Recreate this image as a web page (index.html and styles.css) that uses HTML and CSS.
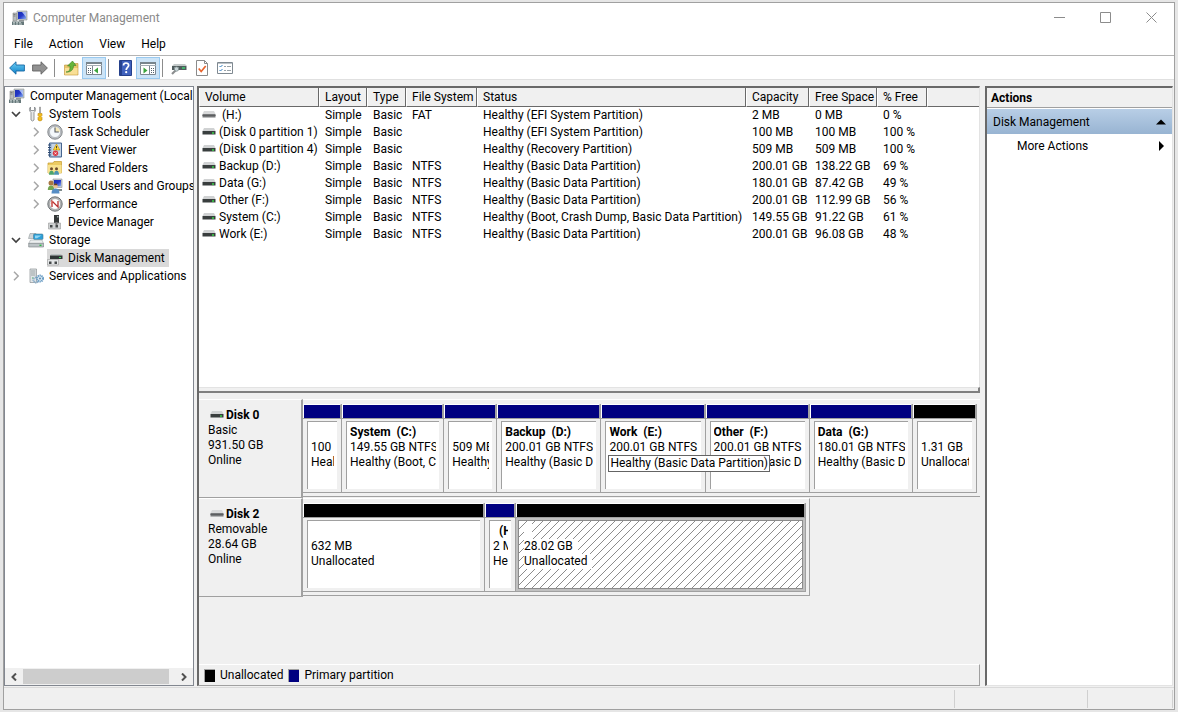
FILE: index.html
```html
<!DOCTYPE html>
<html lang="en">
<head>
<meta charset="utf-8">
<title>Computer Management</title>
<link rel="stylesheet" href="styles.css">
</head>
<body>
<svg class="defs" aria-hidden="true">
  <defs>
    <linearGradient id="gBlue" x1="0" y1="0" x2="0" y2="1"><stop offset="0" stop-color="#6fd0f5"/><stop offset="1" stop-color="#0c7fc8"/></linearGradient>
    <linearGradient id="gScreen" x1="0" y1="0" x2="1" y2="1"><stop offset="0" stop-color="#1a2fb0"/><stop offset=".5" stop-color="#2438c8"/><stop offset="1" stop-color="#8fb4f0"/></linearGradient>
    <pattern id="hatch" width="8" height="8" patternUnits="userSpaceOnUse"><path d="M0 8L8 0M-1 1L1-1M7 9L9 7" stroke="#8c8c8c" stroke-width="1"/></pattern>
  </defs>
  <symbol id="i-computer" viewBox="0 0 16 16">
    <path d="M5 1h10v9H5z" fill="#c4c9cc" stroke="#8d9396" stroke-width=".6"/><path d="M6 2h8v7H6z" fill="url(#gScreen)"/><path d="M10 2l4 0v5z" fill="#d3e4fb" opacity=".75"/>
    <path d="M1 3h3.500v8H1z" fill="#b9bebf" stroke="#777" stroke-width=".5"/><path d="M1.500 4.500h2M1.500 6h2" stroke="#555" stroke-width=".6"/><path d="M7 10h5v1.500H7z" fill="#8e9496"/>
    <path d="M0 11.500h12V15H0z" fill="#66787a"/><path d="M1 12.700h2M4 12.700h2M7 12.700h2M1 14.100h2M4 14.100h2M7 14.100h3" stroke="#d8e0e0" stroke-width=".8"/>
  </symbol>
  <symbol id="i-tools" viewBox="0 0 16 16">
    <path d="M2.500 1C1 2 1 5 3 6.500V14q1.500 2 3 0V6.500C8 5 8 2 6.500 1v3.500h-4z" fill="#e7e9ea" stroke="#7d8285" stroke-width=".8"/>
    <path d="M11.500 1h1v6h-1z" fill="#999" stroke="#888" stroke-width=".5"/><path d="M10 7.500h4v2l-1 1 1 1V14q-2 2-4 0v-2.500l1-1-1-1z" fill="#f2bd1d" stroke="#bd8710" stroke-width=".6"/>
  </symbol>
  <symbol id="i-clock" viewBox="0 0 16 16">
    <circle cx="8" cy="8" r="7.200" fill="#c2c4c8" stroke="#777c80" stroke-width=".9"/><circle cx="8" cy="8" r="5.500" fill="#f4f8fb" stroke="#8d949c" stroke-width=".5"/><path d="M8 3v5h4.800A5 5 0 0 0 8 3z" fill="#f5e8b8"/><path d="M8 3.500V8h3.800" fill="none" stroke="#555b66" stroke-width="1.100"/>
  </symbol>
  <symbol id="i-event" viewBox="0 0 16 16">
    <path d="M2.500 1h12v14h-12z" fill="#a9bed8" stroke="#46658f"/><path d="M5 3h9M5 5h9M5 7h9M5 9h9M5 11h9M5 13h9" stroke="#e7eef7" stroke-width=".9"/><path d="M1 3h3M1 5.500h3M1 8h3M1 10.500h3M1 13h3" stroke="#304a70"/>
    <path d="M9.500 2l3.300 6H6.200z" fill="#ffd83a" stroke="#bf8d00" stroke-width=".6"/><path d="M9.500 4v2M9.500 6.700v.7" stroke="#333" stroke-width=".9"/><circle cx="8.500" cy="11.300" r="2.700" fill="#d93843"/><path d="M7.500 10.300l2 2m0-2l-2 2" stroke="#fff" stroke-width=".8"/>
  </symbol>
  <symbol id="i-shared" viewBox="0 0 16 16">
    <path d="M1 3h5l1-1.500h7.500V13H1z" fill="#eccb62" stroke="#c49b2e" stroke-width=".7"/><path d="M1 5h13.500v8H1z" fill="#f8e28f"/><circle cx="4.500" cy="8.800" r="1.500" fill="#6b4a2d"/><circle cx="9.500" cy="8.800" r="1.500" fill="#6b4a2d"/><path d="M2 14.800q0-4.100 2.500-4.100T7 14.800z" fill="#4ca46c"/><path d="M7 14.800q0-4.100 2.500-4.100t2.500 4.100z" fill="#4b94b3"/>
  </symbol>
  <symbol id="i-users" viewBox="0 0 16 16">
    <path d="M6 1h9v8.500H6z" fill="#cdd0d2" stroke="#8c9194" stroke-width=".6"/><path d="M7 2h7v6.300H7z" fill="url(#gScreen)"/><path d="M10 11h5v2h-5z" fill="#7f8b8c"/>
    <circle cx="4" cy="5" r="2.500" fill="#a87744"/><path d="M.8 12q0-4.500 3.300-4.500T7.300 12z" fill="#74a552"/><circle cx="8.500" cy="8" r="2.300" fill="#efc298"/><path d="M6.300 7.300q2.500-4 4.500 0z" fill="#684421"/><path d="M4.500 15.500q0-5 4-5t4 5z" fill="#568dc5"/>
  </symbol>
  <symbol id="i-perf" viewBox="0 0 16 16">
    <circle cx="8" cy="8" r="7.200" fill="#b6b8ba" stroke="#5f6467" stroke-width=".9"/><circle cx="8" cy="8" r="5.400" fill="#fff" stroke="#888" stroke-width=".5"/><path d="M5 11V5l6 6V5" fill="none" stroke="#b92d2d" stroke-width="1.300"/><path d="M4 8l2-3" stroke="#d96a5c"/>
  </symbol>
  <symbol id="i-device" viewBox="0 0 16 16">
    <path d="M7 1h5v8H7z" fill="#343838"/><path d="M10 2h1.500v1.500H10z" fill="#a2adad"/><path d="M1.500 9h12v6h-12z" fill="#cfd2d3" stroke="#999" stroke-width=".6"/><path d="M3 11h2.500v2.500H3zM8.500 11H11v2.500H8.500z" fill="#464a4b"/><path d="M8.500 8h2v3h-2z" fill="#777"/>
  </symbol>
  <symbol id="i-storage" viewBox="0 0 16 16">
    <path d="M2 1.500h6l1 5H.5z" fill="#cfd4d6" stroke="#858c90" stroke-width=".5"/><rect x="5.500" y="2" width="9.500" height="5.500" rx="1" fill="#2c9fd8" stroke="#487c96" stroke-width=".6"/><path d="M7 3.500h6.500L9 6.300H7z" fill="#8ed5f4"/>
    <path d="M2.500 8h11.500l1.500 3.500H.7z" fill="#eceff0" stroke="#969ca0" stroke-width=".5"/><path d="M.7 11.300h14.800V15H.7z" fill="#bcc3c6" stroke="#777e82" stroke-width=".6"/><path d="M11.500 13.300h2" stroke="#22be3c" stroke-width="1.300"/>
  </symbol>
  <symbol id="i-disk" viewBox="0 0 16 16">
    <path d="M4 4h10l1.500 1.500H3z" fill="#bcc3c4"/><path d="M3 5.500h12.500V9H3z" fill="#303737"/><path d="M12 7.500h2" stroke="#43dc60"/><path d="M.5 9.500h11V15H.5z" fill="#e4e6e7" stroke="#999" stroke-width=".6"/><path d="M2 11.500h2.500V14H2zM7.500 11.500H10V14H7.500z" fill="#45494a"/>
  </symbol>
  <symbol id="i-services" viewBox="0 0 16 16">
    <path d="M2 1h6.500v13.500H2z" fill="#e1e5e7" stroke="#8b9194" stroke-width=".7"/><path d="M3 3h4.500M3 5h4.500M3 7h4.500" stroke="#889296" stroke-width=".8"/><path d="M4 10h1.500" stroke="#42a961"/>
    <circle cx="8" cy="12" r="2.600" fill="none" stroke="#8badc7" stroke-width="2" stroke-dasharray="1.200 .6"/><circle cx="12" cy="10.500" r="3" fill="#dceaf4" stroke="#6b9dc4" stroke-width="2" stroke-dasharray="1.300 .6"/><circle cx="12" cy="10.500" r="1" fill="#5e8bae"/>
  </symbol>
  <symbol id="i-vol" viewBox="0 0 14 9"><path d="M2 1h10l1.500 3H.5z" fill="#d0d2d3"/><path d="M.5 4h13v3.500H.5z" fill="#393e3e"/><path d="M10 6h2" stroke="#37d347" stroke-width="1.300"/></symbol>
  <symbol id="i-volr" viewBox="0 0 14 9"><path d="M2 1h10l1.500 3H.5z" fill="#d8d9da"/><path d="M.5 4h13v3.500H.5z" fill="#77797b"/><path d="M.5 5.500h13" stroke="#5c5e60"/></symbol>
  <symbol id="i-back" viewBox="0 0 16 16"><path d="M.6 8L7 1.800V5h8.400v6H7v3.200z" fill="url(#gBlue)" stroke="#1768a4" stroke-width=".9"/></symbol>
  <symbol id="i-fwd" viewBox="0 0 16 16"><path d="M15.400 8L9 1.800V5H.6v6H9v3.200z" fill="#919191" stroke="#626262" stroke-width=".9"/></symbol>
  <symbol id="i-up" viewBox="0 0 16 16"><path d="M1.500 5h5l1-1.500H15V15H1.500z" fill="#e9c56a" stroke="#bd9238" stroke-width=".6"/><path d="M2 8h12.500v6.500H2z" fill="#f9df96"/><path d="M3 12c4 0 4-3 4-6H4.500L9.500 1 13 5.500h-2.500C10.500 10 7.500 12.500 3 12z" fill="#67b53b" stroke="#388125" stroke-width=".6"/></symbol>
  <symbol id="i-tree" viewBox="0 0 16 16"><path d="M.5 2.500h15v12H.5z" fill="#fff" stroke="#7c8790"/><path d="M0 2h16v2H0z" fill="#78858d"/><path d="M0 5h16v1H0z" fill="#a4adb4"/><path d="M6.500 6v9" stroke="#7c8790"/><path d="M2 8.500h1M4 8.500h1M2 10.500h1M4 10.500h1M2 12.500h1M4 12.500h1" stroke="#54616a"/><path d="M8 10.500l4-3v6z" fill="#3ba53c"/></symbol>
  <symbol id="i-pane" viewBox="0 0 16 16"><path d="M.5 2.500h15v12H.5z" fill="#fff" stroke="#7c8790"/><path d="M0 2h16v2H0z" fill="#78858d"/><path d="M0 5h16v1H0z" fill="#a4adb4"/><path d="M9.500 6v9" stroke="#7c8790"/><path d="M11 8.500h1M13 8.500h1M11 10.500h1M13 10.500h1M11 12.500h1M13 12.500h1" stroke="#54616a"/><path d="M7.500 10.500l-4-3v6z" fill="#3ba53c"/></symbol>
  <symbol id="i-help" viewBox="0 0 16 16"><path d="M2.500.5h12v15h-12z" fill="#3f61bd" stroke="#25408b"/><path d="M3 1h2v14H3z" fill="#26428f"/><path d="M6.500 5.500Q6.500 3 9 3t2.700 2.300c0 2-2.500 2-2.500 4.700" fill="none" stroke="#fff" stroke-width="1.700"/><circle cx="9.200" cy="12.200" r="1.100" fill="#fff"/></symbol>
  <symbol id="i-connect" viewBox="0 0 16 16"><path d="M3 4h11l2 2H1z" fill="#c4caca"/><path d="M1 6h14.500v4H1z" fill="#505c5d"/><path d="M3 8h5" stroke="#a5b0b1"/><path d="M11 8h3" stroke="#3fd071" stroke-width="1.500"/><path d="M1 14l4-4" stroke="#8b8d8e" stroke-width="2.200"/><circle cx="5.500" cy="9" r="2.200" fill="#c9d6d8" stroke="#768485" stroke-width=".7"/></symbol>
  <symbol id="i-check" viewBox="0 0 16 16"><path d="M2.500.5h8l3 3v12h-11z" fill="#fff" stroke="#8b8b8b"/><path d="M10.500.5v3h3" fill="none" stroke="#8b8b8b"/><path d="M4.700 8.500l2.500 3 4.500-5.500" fill="none" stroke="#e8632c" stroke-width="1.700"/></symbol>
  <symbol id="i-list" viewBox="0 0 16 16"><path d="M.5 2.500h15v11H.5z" fill="#fff" stroke="#7f8991"/><path d="M1 3h14v1H1z" fill="#bcc3c8"/><path d="M2.500 6l1 1 2-2M2.500 10l1 1 2-2" fill="none" stroke="#3783c5"/><path d="M7 6.500h2M10 6.500h4M7 10.500h2M10 10.500h4" stroke="#99a2a8"/></symbol>
  <symbol id="c-right" viewBox="0 0 10 10"><path d="M3 .8L7.200 5 3 9.200" fill="none" stroke="#a6a6a6" stroke-width="1.500"/></symbol>
  <symbol id="c-down" viewBox="0 0 10 10"><path d="M1 3L5 7 9 3" fill="none" stroke="#404040" stroke-width="1.700"/></symbol>
</svg>

<div class="window">
  <header class="titlebar">
    <svg class="ico"><use href="#i-computer"/></svg>
    <h1 class="title">Computer Management</h1>
    <div class="controls">
      <button class="ctl" aria-label="Minimize"><svg viewBox="0 0 11 11"><path d="M0 5.500h11"/></svg></button>
      <button class="ctl" aria-label="Maximize"><svg viewBox="0 0 11 11"><path d="M.5.5h10v10H.5z"/></svg></button>
      <button class="ctl" aria-label="Close"><svg viewBox="0 0 11 11"><path d="M.5.5l10 10M10.500.5l-10 10"/></svg></button>
    </div>
  </header>
  <nav class="menubar">
    <button class="menu">File</button><button class="menu">Action</button><button class="menu">View</button><button class="menu">Help</button>
  </nav>
  <div class="toolbar" role="toolbar">
    <button class="tool" aria-label="Back"><svg class="ico"><use href="#i-back"/></svg></button>
    <button class="tool" aria-label="Forward"><svg class="ico"><use href="#i-fwd"/></svg></button>
    <span class="sep"></span>
    <button class="tool" aria-label="Up one level"><svg class="ico"><use href="#i-up"/></svg></button>
    <button class="tool on" aria-label="Show console tree"><svg class="ico"><use href="#i-tree"/></svg></button>
    <span class="sep"></span>
    <button class="tool" aria-label="Help"><svg class="ico"><use href="#i-help"/></svg></button>
    <button class="tool on" aria-label="Show action pane"><svg class="ico"><use href="#i-pane"/></svg></button>
    <span class="sep"></span>
    <button class="tool" aria-label="Refresh"><svg class="ico"><use href="#i-connect"/></svg></button>
    <button class="tool" aria-label="Check"><svg class="ico"><use href="#i-check"/></svg></button>
    <button class="tool" aria-label="Settings"><svg class="ico"><use href="#i-list"/></svg></button>
  </div>

  <div class="body">
    <aside class="tree-pane">
      <ul class="tree">
        <li class="node root"><svg class="ico"><use href="#i-computer"/></svg><span class="name">Computer Management (Local</span></li>
        <li class="node"><button class="twist" aria-label="Collapse"><svg><use href="#c-down"/></svg></button><svg class="ico"><use href="#i-tools"/></svg><span class="name">System Tools</span></li>
        <li class="node sub"><button class="twist" aria-label="Expand"><svg><use href="#c-right"/></svg></button><svg class="ico"><use href="#i-clock"/></svg><span class="name">Task Scheduler</span></li>
        <li class="node sub"><button class="twist" aria-label="Expand"><svg><use href="#c-right"/></svg></button><svg class="ico"><use href="#i-event"/></svg><span class="name">Event Viewer</span></li>
        <li class="node sub"><button class="twist" aria-label="Expand"><svg><use href="#c-right"/></svg></button><svg class="ico"><use href="#i-shared"/></svg><span class="name">Shared Folders</span></li>
        <li class="node sub"><button class="twist" aria-label="Expand"><svg><use href="#c-right"/></svg></button><svg class="ico"><use href="#i-users"/></svg><span class="name">Local Users and Groups</span></li>
        <li class="node sub"><button class="twist" aria-label="Expand"><svg><use href="#c-right"/></svg></button><svg class="ico"><use href="#i-perf"/></svg><span class="name">Performance</span></li>
        <li class="node sub"><span class="twist"></span><svg class="ico"><use href="#i-device"/></svg><span class="name">Device Manager</span></li>
        <li class="node"><button class="twist" aria-label="Collapse"><svg><use href="#c-down"/></svg></button><svg class="ico"><use href="#i-storage"/></svg><span class="name">Storage</span></li>
        <li class="node sub"><span class="twist"></span><span class="picked"><svg class="ico"><use href="#i-disk"/></svg><span class="name">Disk Management</span></span></li>
        <li class="node"><button class="twist" aria-label="Expand"><svg><use href="#c-right"/></svg></button><svg class="ico"><use href="#i-services"/></svg><span class="name">Services and Applications</span></li>
      </ul>
      <div class="hscroll">
        <button class="arrow" aria-label="Scroll left"><svg viewBox="0 0 8 8"><path d="M6 .5L2.500 4 6 7.500"/></svg></button>
        <div class="track"><div class="thumb"></div></div>
        <button class="arrow" aria-label="Scroll right"><svg viewBox="0 0 8 8"><path d="M2 .5L5.500 4 2 7.500"/></svg></button>
      </div>
    </aside>

    <main class="center">
      <section class="volumes">
        <table class="grid">
          <colgroup><col class="w-vol"><col class="w-lay"><col class="w-type"><col class="w-fs"><col class="w-stat"><col class="w-cap"><col class="w-free"><col class="w-pct"><col></colgroup>
          <thead><tr><th>Volume</th><th>Layout</th><th>Type</th><th>File System</th><th>Status</th><th>Capacity</th><th>Free Space</th><th>% Free</th><th></th></tr></thead>
          <tbody>
            <tr><td><svg class="vol"><use href="#i-volr"/></svg>&nbsp;(H:)</td><td>Simple</td><td>Basic</td><td>FAT</td><td>Healthy (EFI System Partition)</td><td>2 MB</td><td>0 MB</td><td>0 %</td><td></td></tr>
            <tr><td><svg class="vol"><use href="#i-vol"/></svg>(Disk 0 partition 1)</td><td>Simple</td><td>Basic</td><td></td><td>Healthy (EFI System Partition)</td><td>100 MB</td><td>100 MB</td><td>100 %</td><td></td></tr>
            <tr><td><svg class="vol"><use href="#i-vol"/></svg>(Disk 0 partition 4)</td><td>Simple</td><td>Basic</td><td></td><td>Healthy (Recovery Partition)</td><td>509 MB</td><td>509 MB</td><td>100 %</td><td></td></tr>
            <tr><td><svg class="vol"><use href="#i-vol"/></svg>Backup (D:)</td><td>Simple</td><td>Basic</td><td>NTFS</td><td>Healthy (Basic Data Partition)</td><td>200.01 GB</td><td>138.22 GB</td><td>69 %</td><td></td></tr>
            <tr><td><svg class="vol"><use href="#i-vol"/></svg>Data (G:)</td><td>Simple</td><td>Basic</td><td>NTFS</td><td>Healthy (Basic Data Partition)</td><td>180.01 GB</td><td>87.42 GB</td><td>49 %</td><td></td></tr>
            <tr><td><svg class="vol"><use href="#i-vol"/></svg>Other (F:)</td><td>Simple</td><td>Basic</td><td>NTFS</td><td>Healthy (Basic Data Partition)</td><td>200.01 GB</td><td>112.99 GB</td><td>56 %</td><td></td></tr>
            <tr><td><svg class="vol"><use href="#i-vol"/></svg>System (C:)</td><td>Simple</td><td>Basic</td><td>NTFS</td><td>Healthy (Boot, Crash Dump, Basic Data Partition)</td><td>149.55 GB</td><td>91.22 GB</td><td>61 %</td><td></td></tr>
            <tr><td><svg class="vol"><use href="#i-vol"/></svg>Work (E:)</td><td>Simple</td><td>Basic</td><td>NTFS</td><td>Healthy (Basic Data Partition)</td><td>200.01 GB</td><td>96.08 GB</td><td>48 %</td><td></td></tr>
          </tbody>
        </table>
      </section>
      <div class="splitter"></div>
      <section class="disks">
        <article class="disk">
          <div class="disk-info">
            <h2 class="disk-name"><svg class="vol"><use href="#i-vol"/></svg>Disk 0</h2>
            <p>Basic</p><p>931.50 GB</p><p>Online</p>
          </div>
          <div class="parts parts-0">
            <div class="part"><div class="bar"></div><div class="cell"><div class="face"><b></b><p>100 MB</p><p>Healthy</p></div></div></div>
            <div class="part"><div class="bar"></div><div class="cell"><div class="face"><b>System&nbsp; (C:)</b><p>149.55 GB NTFS</p><p>Healthy (Boot, Crash Dump)</p></div></div></div>
            <div class="part"><div class="bar"></div><div class="cell"><div class="face"><b></b><p>509 MB</p><p>Healthy</p></div></div></div>
            <div class="part"><div class="bar"></div><div class="cell"><div class="face"><b>Backup&nbsp; (D:)</b><p>200.01 GB NTFS</p><p>Healthy (Basic Data)</p></div></div></div>
            <div class="part tipped"><div class="bar"></div><div class="cell"><div class="face"><b>Work&nbsp; (E:)</b><p>200.01 GB NTFS</p></div></div><span class="tip" role="tooltip">Healthy (Basic Data Partition)</span></div>
            <div class="part"><div class="bar"></div><div class="cell"><div class="face"><b>Other&nbsp; (F:)</b><p>200.01 GB NTFS</p><p>Healthy (Basic Data)</p></div></div></div>
            <div class="part"><div class="bar"></div><div class="cell"><div class="face"><b>Data&nbsp; (G:)</b><p>180.01 GB NTFS</p><p>Healthy (Basic Data)</p></div></div></div>
            <div class="part"><div class="bar free"></div><div class="cell"><div class="face"><b></b><p>1.31 GB</p><p>Unallocated</p></div></div></div>
          </div>
        </article>
        <article class="disk">
          <div class="disk-info">
            <h2 class="disk-name"><svg class="vol"><use href="#i-volr"/></svg>Disk 2</h2>
            <p>Removable</p><p>28.64 GB</p><p>Online</p>
          </div>
          <div class="parts parts-2">
            <div class="part"><div class="bar free"></div><div class="cell"><div class="face"><b></b><p>632 MB</p><p>Unallocated</p></div></div></div>
            <div class="part"><div class="bar"></div><div class="cell"><div class="face"><b>&nbsp; (H:)</b><p>2 MB</p><p>Healthy</p></div></div></div>
            <div class="part chosen"><div class="bar free"></div><div class="cell"><div class="face"><svg class="hatch"><rect width="100%" height="100%" fill="url(#hatch)" shape-rendering="crispEdges"/></svg><b><span>&nbsp; </span></b><p><span>28.02 GB</span></p><p><span>Unallocated</span></p></div></div></div>
          </div>
        </article>
        <footer class="legend"><i class="key free"></i>Unallocated<i class="key"></i>Primary partition</footer>
      </section>
    </main>

    <aside class="actions">
      <h2 class="actions-head">Actions</h2>
      <button class="group">Disk Management<svg class="tri" viewBox="0 0 10 10"><path d="M0 7.500h10L5 2.500z"/></svg></button>
      <button class="more">More Actions<svg class="tri" viewBox="0 0 10 10"><path d="M3 0v10l5-5z"/></svg></button>
    </aside>
  </div>
  <footer class="status"><span></span><span class="s2"></span><span class="s3"></span></footer>
</div>
</body>
</html>
```
FILE: styles.css
```css
* { box-sizing: border-box; }
body {
  margin: 0;
  height: 100vh;
  padding: 2px 3px 2px 3px;
  background: #e6e6e6;
  color: #000;
  font: 12px/16px Roboto, "Open Sans", sans-serif;
}
button { border: 0; padding: 0; background: none; color: inherit; font: inherit; }
h1, h2, p, ul { margin: 0; padding: 0; font: inherit; }
ul { list-style: none; }
.defs { position: absolute; width: 0; height: 0; }
.ico { width: 16px; height: 16px; flex: none; }

.window {
  display: flex;
  flex-direction: column;
  height: 100%;
  border: 1px solid #a0a0a0;
  background: #f0f0f0;
}
.titlebar { display: flex; align-items: center; height: 29px; padding-left: 8px; gap: 5px; background: #fff; }
.title { flex: 1; color: #8a8a8a; }
.controls { display: flex; }
.ctl { width: 46px; height: 28px; display: grid; place-items: center; }
.ctl svg { width: 11px; height: 11px; fill: none; stroke: #8c8c8c; }
.menubar { display: flex; height: 24px; padding-left: 2px; background: #fff; border-bottom: 1px solid #b4b4b4; }
.menu { padding: 0 8px; }
.toolbar { display: flex; align-items: center; height: 24px; padding-left: 1px; background: #fff; border-bottom: 1px solid #e0e0e0; }
.tool { display: grid; place-items: center; width: 23px; height: 22px; }
.tool.on { width: 24px; background: #cce4f7; border: 1px solid #99c9ef; }
.sep { width: 1px; height: 18px; margin: 0 4px 0 3px; background: #8c8c8c; }
.on + .sep { margin-left: 2px; }

.body {
  flex: 1;
  min-height: 0;
  display: grid;
  grid-template-columns: 190px minmax(0, 1fr) 188px;
  gap: 3px;
  padding: 6px 1px 1px 0;
}
.tree-pane { display: flex; flex-direction: column; border: 1px solid #828790; background: #fff; overflow: hidden; }
.tree { flex: 1; }
.node { display: flex; align-items: center; height: 18px; padding-left: 5px; white-space: nowrap; }
.node.root { padding-left: 4px; }
.node.sub { padding-left: 25px; }
.name { padding-left: 5px; }
.twist { flex: none; display: grid; place-items: center; width: 12px; height: 16px; margin-right: 5px; }
.node:not(.sub) .twist { margin-right: 6px; }
.twist svg { width: 10px; height: 10px; }
.picked { display: flex; align-items: center; height: 18px; padding-right: 4px; background: #d9d9d9; }
.hscroll { display: flex; height: 17px; background: #f0f0f0; }
.arrow { display: grid; place-items: center; width: 18px; }
.arrow svg { width: 8px; height: 8px; fill: none; stroke: #505050; stroke-width: 2; }
.track { flex: 1; padding: 1px 0; }
.thumb { width: 96%; height: 15px; background: #cdcdcd; }

.center { display: flex; flex-direction: column; margin-right: 2px; border-left: 2px solid #696969; border-bottom: 1px solid #a0a0a0; min-height: 0; }
.volumes { flex: 0 1 301px; border-top: 2px solid #696969; border-right: 1px solid #e3e3e3; background: #fff; overflow: hidden; }
.grid { width: 100%; table-layout: fixed; border-collapse: separate; border-spacing: 0; white-space: nowrap; }
.w-vol { width: 120px; }
.w-lay { width: 48px; }
.w-type { width: 39px; }
.w-fs { width: 71px; }
.w-stat { width: 269px; }
.w-cap { width: 63px; }
.w-free { width: 68px; }
.w-pct { width: 50px; }
.grid th {
  height: 19px; padding: 0 0 0 5px;
  line-height: 18px; font-weight: 400; text-align: left;
  background: #f0f0f0;
  border-right: 1px solid #696969; border-bottom: 1px solid #696969; border-left: 1px solid #fff;
}
.grid th:last-child { border-right: 0; }
.grid td { height: 17px; padding: 0 0 0 6px; line-height: 17px; }
.grid td:first-child { padding-left: 3px; }
.vol { width: 14px; height: 9px; margin-right: 3px; }
.disk-name .vol { margin-right: 2px; }
.splitter { height: 6px; border-bottom: 2px solid #808080; border-right: 2px solid #808080; border-top: 1px solid #e3e3e3; }

.disks { flex: 1; min-height: 0; display: flex; flex-direction: column; padding-top: 6px; }
.disk { display: flex; height: 99px; }
.disk-info { width: 104px; padding: 8px 0 0 9px; line-height: 15px; border-right: 2px solid #a0a0a0; border-bottom: 1px solid #a0a0a0; border-top: 1px solid #fff; }
.disk-name { padding-left: 2px; font-weight: 700; }
.parts { display: grid; flex: 1; min-width: 0; padding: 4px 3px 3px 0; border-bottom: 1px solid #a0a0a0; border-top: 1px solid #fff; margin-bottom: 1px; }
.parts-0 { grid-template-columns: 39fr 102fr 53fr 104fr 104fr 104fr 103fr 64fr; }
.parts-2 { flex: 0 0 75%; max-width: 507px; grid-template-columns: 182fr 31fr 290fr; border-right: 1px solid #a0a0a0; }
.part { display: flex; flex-direction: column; min-width: 0; border-right: 1px solid #a0a0a0; border-bottom: 1px solid #a0a0a0; }
.bar { height: 14px; background: #000080; border: 1px solid #fff; border-right-color: #a0a0a0; border-bottom: 0; }
.bar.free { background: #000; }
.cell { flex: 1; display: flex; padding: 2px 4px 3px 4px; border-top: 1px solid #a0a0a0; }
.face { position: relative; flex: 1; min-width: 0; padding: 3px 3px 0 3px; overflow: hidden; white-space: nowrap; line-height: 15px; background: #fff; border-left: 1px solid #a0a0a0; border-top: 1px solid #a0a0a0; }
.face b { position: relative; display: block; height: 15px; overflow: hidden; font-weight: 700; }
.face p { position: relative; overflow: hidden; height: 15px; }
.tipped { position: relative; }
.tip { position: absolute; z-index: 2; left: 7px; top: 51px; height: 17px; padding: 0 1px; border: 1px solid #646464; background: #fff; line-height: 15px; white-space: nowrap; }
.chosen .cell { padding: 2px; background: #c0c0c0; }
.chosen .face { border: 1px solid #8c8c8c; padding-left: 5px; }
.chosen .face span { display: inline-block; padding-right: 5px; background: #fff; }
.hatch { position: absolute; inset: 0; width: 100%; height: 100%; }
.legend { display: flex; align-items: center; height: 21px; margin-top: auto; padding-left: 5px; border-top: 1px solid #fff; border-right: 1px solid #a0a0a0; }
.key { width: 11px; height: 13px; margin: 0 5px 0 5px; background: #000080; border: 1px solid #a0a0a0; border-width: 1px 0 0 1px; }
.key.free { margin-left: 0; background: #000; }

.actions { border: 2px solid #696969; border-right: 1px solid #e3e3e3; border-bottom: 1px solid #e3e3e3; background: #fff; }
.actions-head { height: 20px; padding: 2px 4px 0; background: #f0f0f0; border-bottom: 1px solid #a0a0a0; font-weight: 700; }
.group, .more { display: flex; align-items: center; justify-content: space-between; width: 100%; height: 25px; padding: 0 6px; }
.group { margin-top: 1px; background: linear-gradient(#b8cee6, #98b4d2); }
.more { height: 24px; padding-left: 30px; }
.tri { width: 10px; height: 10px; }

.status { display: flex; height: 22px; padding: 2px 1px 1px; border-top: 1px solid #dadada; }
.status span { flex: 1; border-right: 1px solid #d0d0d0; }
.status .s2 { flex: 0 0 133px; }
.status .s3 { flex: 0 0 85px; }
```
